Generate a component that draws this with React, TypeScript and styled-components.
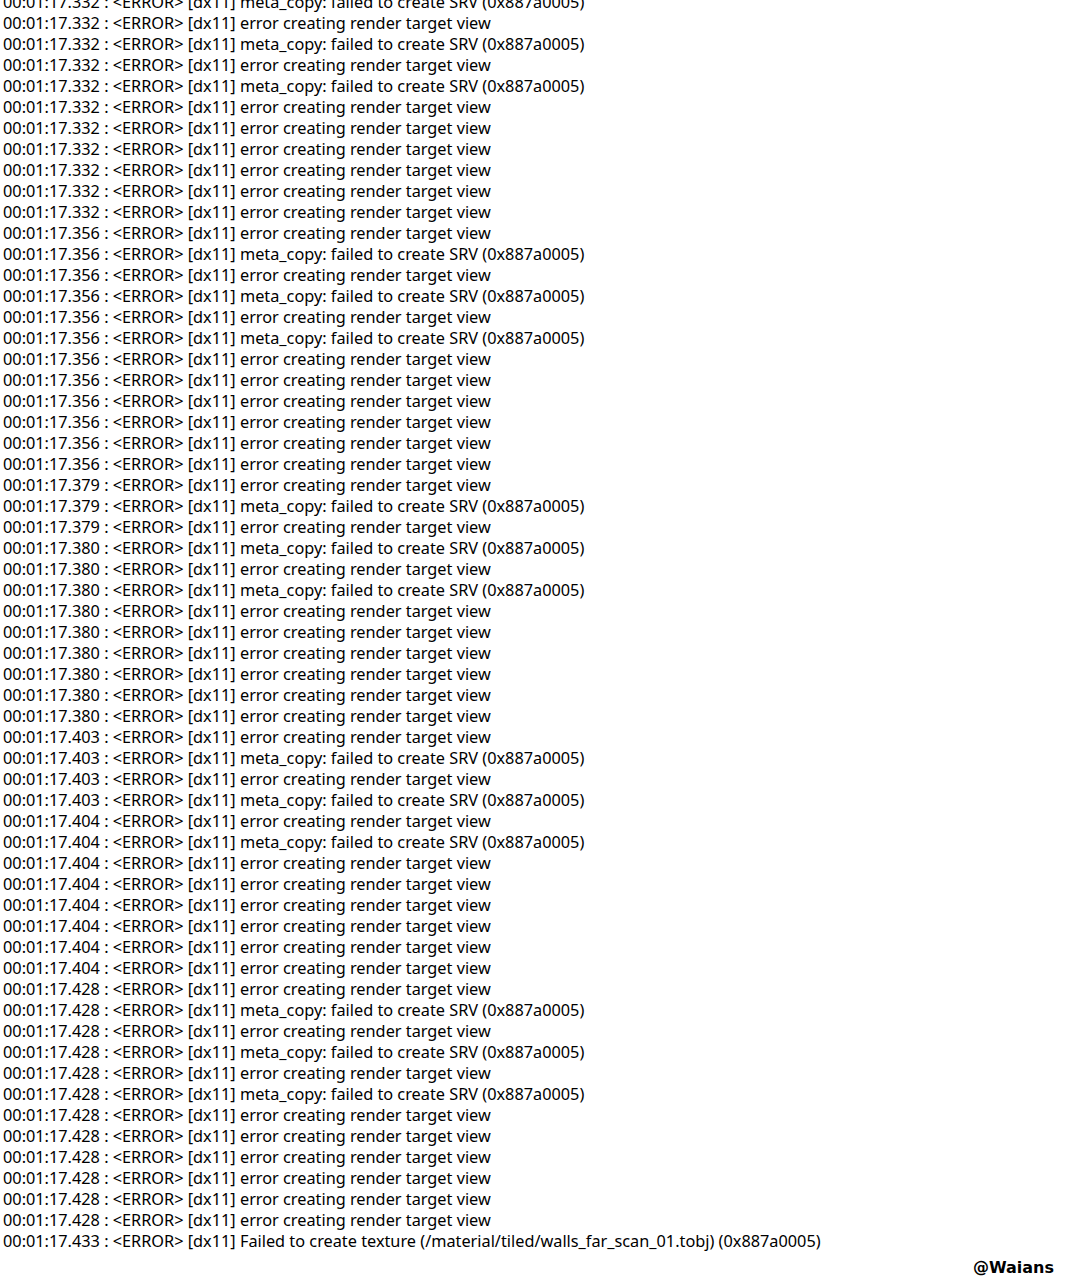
import React from "react";
import styled, { createGlobalStyle } from "styled-components";

const Global = createGlobalStyle`
  html, body { margin: 0; padding: 0; background: #ffffff; }
  body { overflow: hidden; }
`;

const Page = styled.div`
  width: 1066px;
  height: 1288px;
  overflow: hidden;
  background: #ffffff;
  display: flex;
  flex-direction: column;
  justify-content: space-between;
`;

const Log = styled.div`
  display: flex;
  flex-direction: column;
  margin-top: -8px;
  padding-left: 3px;
  font-family: "Noto Sans", "Noto Sans CJK SC", sans-serif;
  font-size: 16.3px;
  color: #000000;
`;

const Line = styled.div`
  height: 21px;
  line-height: 21px;
  white-space: pre;
`;

const Footer = styled.div`
  display: flex;
  justify-content: flex-end;
  padding: 0 12px 11px 0;
`;

const Watermark = styled.span`
  font-family: "DejaVu Sans", sans-serif;
  font-weight: bold;
  font-size: 16px;
  color: #000;
  text-shadow: 1px 0 #fff, -1px 0 #fff, 0 1px #fff, 0 -1px #fff;
`;

type Kind = "e" | "m";

const seq: [string, Kind][] = [
  ["332", "m"], ["332", "e"], ["332", "m"], ["332", "e"], ["332", "m"],
  ["332", "e"], ["332", "e"], ["332", "e"], ["332", "e"], ["332", "e"], ["332", "e"],
  ["356", "e"], ["356", "m"], ["356", "e"], ["356", "m"], ["356", "e"], ["356", "m"],
  ["356", "e"], ["356", "e"], ["356", "e"], ["356", "e"], ["356", "e"], ["356", "e"],
  ["379", "e"], ["379", "m"], ["379", "e"], ["380", "m"], ["380", "e"], ["380", "m"],
  ["380", "e"], ["380", "e"], ["380", "e"], ["380", "e"], ["380", "e"], ["380", "e"],
  ["403", "e"], ["403", "m"], ["403", "e"], ["403", "m"], ["404", "e"], ["404", "m"],
  ["404", "e"], ["404", "e"], ["404", "e"], ["404", "e"], ["404", "e"], ["404", "e"],
  ["428", "e"], ["428", "m"], ["428", "e"], ["428", "m"], ["428", "e"], ["428", "m"],
  ["428", "e"], ["428", "e"], ["428", "e"], ["428", "e"], ["428", "e"], ["428", "e"],
];

const msg = (k: Kind) =>
  k === "m"
    ? "meta_copy: failed to create SRV (0x887a0005)"
    : "error creating render target view";

export default function App() {
  return (
    <Page>
      <Global />
      <Log>
        {seq.map(([t, k], i) => (
          <Line key={i}>{`00:01:17.${t} : <ERROR> [dx11] ${msg(k)}`}</Line>
        ))}
        <Line>
          {"00:01:17.433 : <ERROR> [dx11] Failed to create texture (/material/tiled/walls_far_scan_01.tobj) (0x887a0005)"}
        </Line>
      </Log>
      <Footer>
        <Watermark>@Waians</Watermark>
      </Footer>
    </Page>
  );
}
